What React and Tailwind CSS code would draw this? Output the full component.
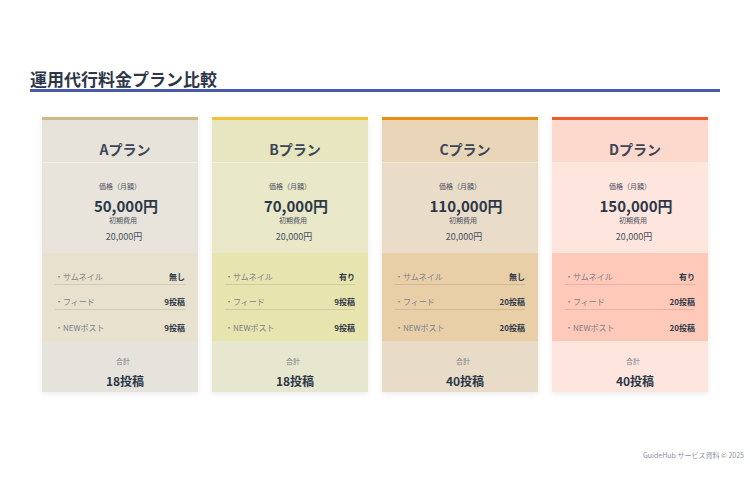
import React from 'react';

const plans = [
  {
    name: 'Aプラン', price: '50,000円', thumb: '無し', feed: '9投稿', post: '9投稿', total: '18投稿',
    top: 'border-t-[#cbb98a]', head: 'bg-[#e7e3da]', body: 'bg-[#e8e4dc]', feat: 'bg-[#e8e1cd]', foot: 'bg-[#e6e3dc]',
  },
  {
    name: 'Bプラン', price: '70,000円', thumb: '有り', feed: '9投稿', post: '9投稿', total: '18投稿',
    top: 'border-t-[#f2c235]', head: 'bg-[#e8e6c0]', body: 'bg-[#e9e8c9]', feat: 'bg-[#e8e4b0]', foot: 'bg-[#e7e6cf]',
  },
  {
    name: 'Cプラン', price: '110,000円', thumb: '無し', feed: '20投稿', post: '20投稿', total: '40投稿',
    top: 'border-t-[#e88c12]', head: 'bg-[#e9d6b8]', body: 'bg-[#e9dcc8]', feat: 'bg-[#e9cfa8]', foot: 'bg-[#e8dcc8]',
  },
  {
    name: 'Dプラン', price: '150,000円', thumb: '有り', feed: '20投稿', post: '20投稿', total: '40投稿',
    top: 'border-t-[#ee5c2c]', head: 'bg-[#fdd9cd]', body: 'bg-[#fee5dd]', feat: 'bg-[#fec9b8]', foot: 'bg-[#fee6df]',
  },
];

const Row = ({ label, value, last }) => (
  <div className={`flex items-end justify-between h-[25px] pb-[1px] ${last ? '' : 'border-b border-black/10'}`}>
    <span className="text-[8px] leading-[12px] text-[#7a7f88]">・{label}</span>
    <span className="text-[8px] leading-[12px] font-bold text-[#2d3748]">{value}</span>
  </div>
);

const PlanCard = ({ p }) => (
  <div className={`flex flex-col border-t-[3px] ${p.top} shadow-[0_2px_6px_rgba(0,0,0,0.08)]`}>
    {/* header */}
    <div className={`${p.head} h-[43px] flex items-end justify-center pb-[3px] border-b border-white/40`}>
      <h3 className="ml-[10px] text-[14px] leading-[20px] font-bold text-[#3c4658]">{p.name}</h3>
    </div>

    {/* price */}
    <div className={`${p.body} h-[90px] flex flex-col items-center pt-[18px]`}>
      <p className="text-[7px] leading-[10px] text-[#4a5160]">価格（月額）</p>
      <p className="ml-[12px] mt-[5px] text-[15px] leading-[20px] font-bold text-[#2d3748]">{p.price}</p>
      <p className="ml-[6px] -mt-[1px] text-[7px] leading-[10px] text-[#4a5160]">初期費用</p>
      <p className="ml-[8px] mt-[6px] text-[9px] leading-[12px] text-[#4a5160]">20,000円</p>
    </div>

    {/* features */}
    <div className={`${p.feat} h-[88px] px-[13px] pt-[7px]`}>
      <Row label="サムネイル" value={p.thumb} />
      <Row label="フィード" value={p.feed} />
      <Row label="NEWポスト" value={p.post} last />
    </div>

    {/* total */}
    <div className={`${p.foot} h-[51px] flex flex-col items-center pt-[15px]`}>
      <p className="ml-[6px] text-[7px] leading-[10px] text-[#7a7f88]">合計</p>
      <p className="ml-[10px] mt-[6px] text-[12px] leading-[18px] font-bold text-[#2d3748]">{p.total}</p>
    </div>
  </div>
);

export default function App() {
  return (
    <div
      className="w-[750px] h-[500px] bg-white flex flex-col"
      style={{ fontFamily: '"Noto Sans CJK JP", "Noto Sans", sans-serif' }}
    >
      <div className="px-[30px] pt-[68px]">
        <h2 className="text-[17px] leading-[21px] font-bold text-[#2d3748] border-b-[3px] border-[#4a5aa8]">
          運用代行料金プラン比較
        </h2>
      </div>

      <div className="grid grid-cols-4 gap-[14px] px-[42px] mt-[25px]">
        {plans.map((p) => (
          <PlanCard key={p.name} p={p} />
        ))}
      </div>

      <div className="flex-1" />
      <div className="flex justify-end pr-[6px] pb-[40px]">
        <span className="text-[7px] leading-[10px] text-[#8a90a0]">GuideHub サービス資料 © 2025</span>
      </div>
    </div>
  );
}
